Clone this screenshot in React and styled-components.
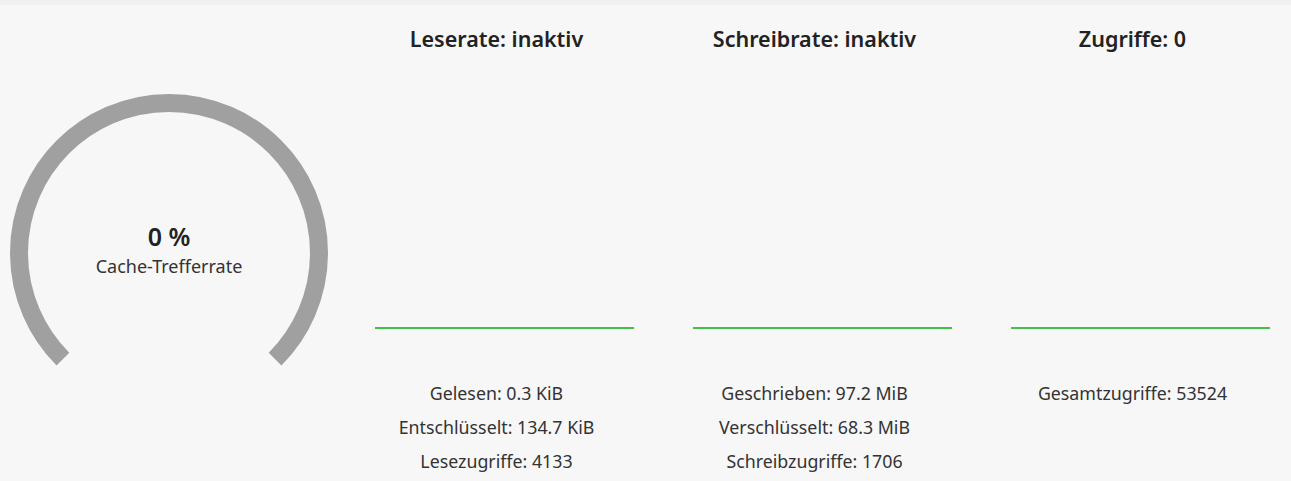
import React from 'react';
import styled, { createGlobalStyle } from 'styled-components';

const GlobalStyle = createGlobalStyle`
  html, body {
    margin: 0;
    padding: 0;
    background: #f7f7f7;
    font-family: "Noto Sans", "Open Sans", sans-serif;
    color: #222;
  }
`;

const Page = styled.div`
  width: 1291px;
  height: 481px;
  overflow: hidden;
  background: #f7f7f7;
`;

const TopStrip = styled.div`
  height: 5px;
  background: #f0f0f0;
`;

const Main = styled.div`
  display: flex;
  padding-left: 10px;
`;

const GaugeWrap = styled.div`
  display: grid;
  width: 318px;
  margin-top: 89px;
  & > * {
    grid-area: 1 / 1;
  }
`;

const GaugeLabel = styled.div`
  display: flex;
  flex-direction: column;
  align-items: center;
  gap: 2px;
  padding-top: 126px;
  height: max-content;
`;

const Percent = styled.span`
  font-size: 25px;
  font-weight: 600;
  line-height: 32px;
  color: #222;
`;

const Caption = styled.span`
  font-size: 18px;
  line-height: 24px;
  color: #333;
`;

const Columns = styled.div`
  display: grid;
  grid-template-columns: repeat(3, 259px);
  column-gap: 59px;
  margin-left: 47px;
`;

const Column = styled.div`
  display: flex;
  flex-direction: column;
  align-items: center;
`;

const Title = styled.h3`
  margin: 20px 16px 0 0;
  font-size: 21.5px;
  font-weight: 600;
  line-height: 28px;
  color: #222;
`;

const Chart = styled.div`
  width: 100%;
  height: 276px;
  display: flex;
  align-items: flex-end;
`;

const Baseline = styled.div`
  width: 100%;
  height: 2px;
  background: #45c245;
`;

const Stats = styled.div`
  margin-top: 47px;
  margin-right: 16px;
  display: flex;
  flex-direction: column;
  align-items: center;
`;

const Stat = styled.span`
  font-size: 17.8px;
  line-height: 34px;
  color: #333;
`;

function Gauge() {
  const cx = 159;
  const cy = 159;
  const r = 150;
  const a0 = (135 * Math.PI) / 180;
  const a1 = (45 * Math.PI) / 180;
  const x0 = cx + r * Math.cos(a0);
  const y0 = cy + r * Math.sin(a0);
  const x1 = cx + r * Math.cos(a1);
  const y1 = cy + r * Math.sin(a1);
  return (
    <svg width="318" height="290" viewBox="0 0 318 290">
      <path
        d={`M ${x0} ${y0} A ${r} ${r} 0 1 1 ${x1} ${y1}`}
        fill="none"
        stroke="#a0a0a0"
        strokeWidth="18"
      />
    </svg>
  );
}

const columns = [
  {
    title: 'Leserate: inaktiv',
    stats: ['Gelesen: 0.3 KiB', 'Entschlüsselt: 134.7 KiB', 'Lesezugriffe: 4133'],
  },
  {
    title: 'Schreibrate: inaktiv',
    stats: ['Geschrieben: 97.2 MiB', 'Verschlüsselt: 68.3 MiB', 'Schreibzugriffe: 1706'],
  },
  {
    title: 'Zugriffe: 0',
    stats: ['Gesamtzugriffe: 53524'],
  },
];

export default function App() {
  return (
    <Page>
      <GlobalStyle />
      <TopStrip />
      <Main>
        <GaugeWrap>
          <Gauge />
          <GaugeLabel>
            <Percent>0 %</Percent>
            <Caption>Cache-Trefferrate</Caption>
          </GaugeLabel>
        </GaugeWrap>
        <Columns>
          {columns.map((col) => (
            <Column key={col.title}>
              <Title>{col.title}</Title>
              <Chart>
                <Baseline />
              </Chart>
              <Stats>
                {col.stats.map((s) => (
                  <Stat key={s}>{s}</Stat>
                ))}
              </Stats>
            </Column>
          ))}
        </Columns>
      </Main>
    </Page>
  );
}
